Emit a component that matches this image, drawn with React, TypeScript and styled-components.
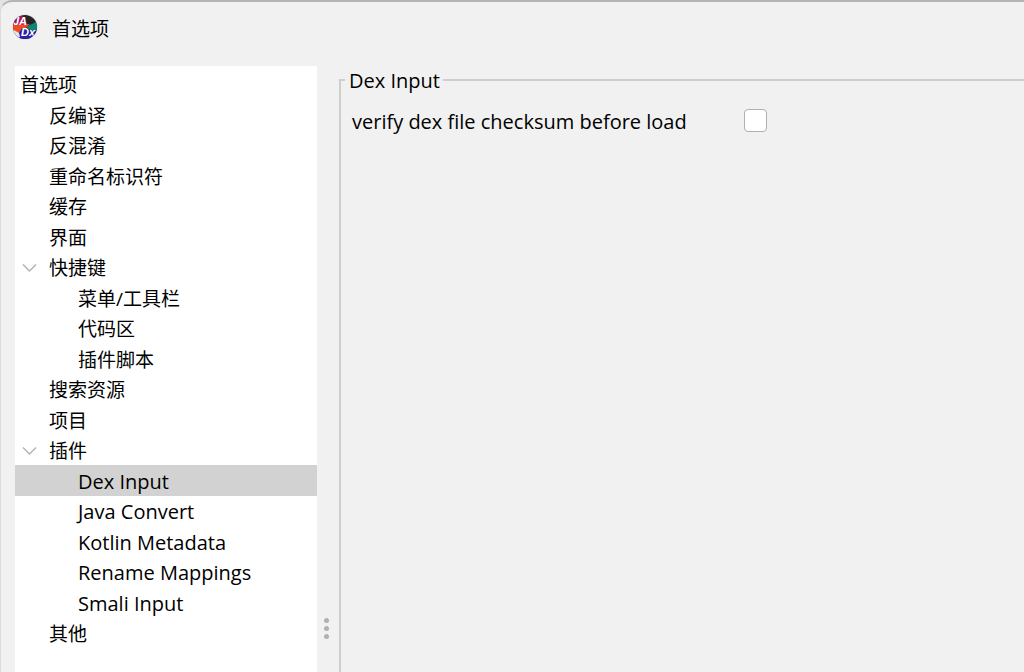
import React, { useState } from "react";
import styled, { createGlobalStyle } from "styled-components";

const GlobalStyle = createGlobalStyle`
  *, *::before, *::after { box-sizing: border-box; }
  html, body { margin: 0; background: #e3e3e3; }
  body, button, input {
    font-family: "Open Sans", "Noto Sans CJK SC", sans-serif;
    font-size: 19px;
    color: #000;
  }
`;

const Window = styled.div`
  display: flex;
  flex-direction: column;
  min-height: 100vh;
  overflow: hidden;
  background: #f1f1f1;
  border-top: 2px solid #b4b4b4;
  border-left: 1px solid #dcdcdc;
  border-top-left-radius: 12px;
`;

const TitleBar = styled.header`
  display: flex;
  align-items: center;
  gap: 14px;
  height: 50px;
  padding-left: 11px;
`;

const Title = styled.h1`
  margin: 0;
  padding-top: 3px;
  font-size: 19px;
  font-weight: 400;
  line-height: 30px;
`;

const Content = styled.main`
  display: flex;
  flex: 1;
  padding: 14px 0 0 14px;
`;

const Tree = styled.ul`
  flex: 0 0 302px;
  margin: 0;
  padding: 3px 0 0;
  list-style: none;
  background: #fff;
`;

const Row = styled.li`
  height: 30px;
  &:nth-child(even) { height: 31px; }
`;

const Item = styled.button<{ $depth: number; $selected: boolean; $latin: boolean }>`
  display: flex;
  align-items: center;
  width: 100%;
  height: 100%;
  padding: 2px 0 0 ${(p) => 5 + p.$depth * 29}px;
  border: 0;
  text-align: left;
  font-size: ${(p) => (p.$latin ? 20 : 19)}px;
  line-height: 28px;
  white-space: nowrap;
  background: ${(p) => (p.$selected ? "#d2d2d2" : "transparent")};
`;

const Chevron = styled.svg`
  flex: none;
  width: 15px;
  height: 10px;
  margin: 0 12px 0 -27px;
`;

const Splitter = styled.div`
  display: flex;
  flex: 0 0 19px;
  flex-direction: column;
  align-items: center;
  justify-content: flex-end;
  gap: 3px;
  padding-bottom: 33px;
  cursor: col-resize;
`;

const Dot = styled.span`
  width: 5px;
  height: 5px;
  border-radius: 50%;
  background: #b0b0b0;
`;

const Group = styled.fieldset`
  flex: 1;
  min-width: 0;
  margin: 0 0 0 3px;
  padding: 10px 0 0 11px;
  border: 2px solid #cecece;
  border-width: 2px 0 0 2px;
`;

const Legend = styled.legend`
  margin-left: -7px;
  padding: 2px 3px 0 4px;
  font-size: 20px;
  line-height: 26px;
`;

const Setting = styled.div`
  display: flex;
  align-items: center;
`;

const SettingLabel = styled.label`
  flex: 0 0 392px;
  padding-top: 4px;
  font-size: 20px;
  line-height: 28px;
`;

const CheckBox = styled.input`
  appearance: none;
  width: 23px;
  height: 23px;
  margin: 0;
  border: 1px solid #afafaf;
  border-radius: 4px;
  background: #fff;
  &:checked { background: #3b82d0; }
`;

type Node = { label: string; depth: number; open?: boolean; latin?: boolean };

const nodes: Node[] = [
  { label: "首选项", depth: 0 },
  { label: "反编译", depth: 1 },
  { label: "反混淆", depth: 1 },
  { label: "重命名标识符", depth: 1 },
  { label: "缓存", depth: 1 },
  { label: "界面", depth: 1 },
  { label: "快捷键", depth: 1, open: true },
  { label: "菜单/工具栏", depth: 2 },
  { label: "代码区", depth: 2 },
  { label: "插件脚本", depth: 2 },
  { label: "搜索资源", depth: 1 },
  { label: "项目", depth: 1 },
  { label: "插件", depth: 1, open: true },
  { label: "Dex Input", depth: 2, latin: true },
  { label: "Java Convert", depth: 2, latin: true },
  { label: "Kotlin Metadata", depth: 2, latin: true },
  { label: "Rename Mappings", depth: 2, latin: true },
  { label: "Smali Input", depth: 2, latin: true },
  { label: "其他", depth: 1 },
];

const Logo = () => (
  <svg width="26" height="26" viewBox="0 0 26 26" aria-hidden="true">
    <defs>
      <clipPath id="disc"><circle cx="13" cy="13" r="12" /></clipPath>
    </defs>
    <circle cx="13" cy="13" r="12.6" fill="#dcdcdc" />
    <g clipPath="url(#disc)">
      <rect width="26" height="26" fill="#262329" />
      <path d="M0 0H9L16 11L6 14L0 12Z" fill="#a3195f" />
      <path d="M0 11L18 10L9 18L5 20L0 15Z" fill="#ee4b24" />
      <path d="M14 13L26 7V18L18 16Z" fill="#0d8577" />
      <path d="M7 19L10 14L19 17L26 17V26H3Z" fill="#2b1fa8" />
      <path d="M0 15L7 19L8 23L4 24H0Z" fill="#e4e4ea" />
      <g fill="#fff" fontFamily="Liberation Sans" fontWeight="700" fontStyle="italic">
        <text x="1" y="11" fontSize="11">JA</text>
        <text x="9" y="22" fontSize="11">Dx</text>
      </g>
    </g>
  </svg>
);

export default function App() {
  const [selected, setSelected] = useState("Dex Input");
  const [verify, setVerify] = useState(false);

  return (
    <>
      <GlobalStyle />
      <Window>
        <TitleBar>
          <Logo />
          <Title>首选项</Title>
        </TitleBar>
        <Content>
          <Tree>
            {nodes.map((n) => (
              <Row key={n.label}>
                <Item
                  type="button"
                  $depth={n.depth}
                  $selected={n.label === selected}
                  $latin={!!n.latin}
                  aria-expanded={n.open}
                  onClick={() => setSelected(n.label)}
                >
                  {n.open && (
                    <Chevron viewBox="0 0 15 10" aria-hidden="true">
                      <path d="M1 1.5L7.5 8L14 1.5" fill="none" stroke="#b4b4b4" strokeWidth="1.5" />
                    </Chevron>
                  )}
                  {n.label}
                </Item>
              </Row>
            ))}
          </Tree>
          <Splitter role="separator" aria-orientation="vertical">
            <Dot />
            <Dot />
            <Dot />
          </Splitter>
          <Group>
            <Legend>Dex Input</Legend>
            <Setting>
              <SettingLabel htmlFor="verify">verify dex file checksum before load</SettingLabel>
              <CheckBox
                id="verify"
                type="checkbox"
                checked={verify}
                onChange={(e) => setVerify(e.target.checked)}
              />
            </Setting>
          </Group>
        </Content>
      </Window>
    </>
  );
}
